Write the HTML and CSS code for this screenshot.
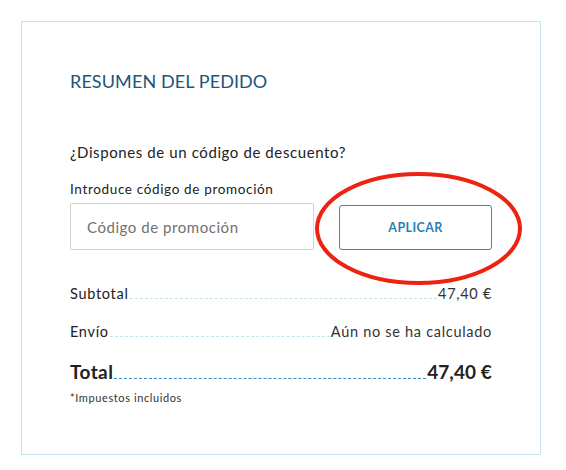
FILE: index.html
```
<!DOCTYPE html>
<html lang="es">
<head>
<meta charset="utf-8">
<link rel="stylesheet" href="styles.css">
</head>
<body>
<div class="card">
  <h2 class="title">RESUMEN DEL PEDIDO</h2>
  <p class="question">¿Dispones de un código de descuento?</p>
  <label class="promo-label" for="promo">Introduce código de promoción</label>
  <div class="promo-row">
    <input id="promo" class="promo-input" type="text" placeholder="Código de promoción">
    <div class="btn-wrap">
      <button class="apply-btn">APLICAR</button>
      <svg class="highlight" width="209" height="115" viewBox="0 0 209 115"><ellipse cx="104.5" cy="57.5" rx="101.5" ry="54.5" fill="none" stroke="#ee2211" stroke-width="4"/></svg>
    </div>
  </div>
  <div class="line">
    <span class="line-label">Subtotal</span><span class="dots"></span><span class="line-value">47,40 €</span>
  </div>
  <div class="line">
    <span class="line-label">Envío</span><span class="dots"></span><span class="line-value">Aún no se ha calculado</span>
  </div>
  <div class="line total">
    <span class="line-label">Total</span><span class="dots"></span><span class="line-value">47,40 €</span>
  </div>
  <p class="taxes">*Impuestos incluidos</p>
</div>
</body>
</html>
```
FILE: styles.css
```
* { box-sizing: border-box; }
html, body { margin: 0; background: #fff; }
body {
  font-family: "Lato", "Noto Sans", sans-serif;
  color: #222;
  padding: 21px 0 0 21px;
}
.card {
  width: 520px;
  height: 434px;
  border: 1px solid #c6e3f0;
  padding: 47px 48px 0 48px;
}
.title {
  margin: 0;
  font-size: 18px;
  font-weight: 400;
  line-height: 24px;
  color: #22557a;
  letter-spacing: 0.1px;
}
.question {
  margin: 49px 0 0;
  font-size: 15px;
  line-height: 20px;
  letter-spacing: 0.6px;
}
.promo-label {
  display: block;
  margin-top: 18px;
  font-size: 13.5px;
  line-height: 18px;
  letter-spacing: 0.65px;
}
.promo-row {
  display: flex;
  align-items: flex-start;
  margin-top: 5px;
}
.promo-input {
  width: 244px;
  height: 47px;
  border: 1px solid #d2d2d2;
  border-radius: 2px;
  padding: 0 16px;
  font-family: inherit;
  font-size: 15px;
  letter-spacing: 0.55px;
  color: #222;
  outline: none;
}
.promo-input::placeholder { color: #707070; }
.btn-wrap {
  position: relative;
  margin-left: 25px;
  margin-top: 2px;
}
.apply-btn {
  display: block;
  width: 153px;
  height: 45px;
  background: #fff;
  border: 1px solid #3a86b6;
  border-radius: 3px;
  color: #2a80b5;
  font-family: inherit;
  font-weight: 700;
  font-size: 12.5px;
  letter-spacing: 0.4px;
}
.highlight {
  position: absolute;
  left: -25px;
  top: -34px;
  pointer-events: none;
}
.line {
  display: flex;
  align-items: baseline;
  font-size: 14.5px;
  line-height: 20px;
  letter-spacing: 0.7px;
}
.dots {
  flex: 1;
  border-bottom: 1px dashed #c6e3f0;
  margin: 0 1px;
}
.promo-row + .line { margin-top: 34px; }
.line + .line { margin-top: 18px; }
.line-value { color: #333; }
.total {
  margin-top: 18px !important;
  font-size: 19px;
  font-weight: 700;
  line-height: 24px;
  letter-spacing: 0.4px;
}
.total .dots { border-bottom-color: #3d8fc0; }
.total .line-value { color: #222; letter-spacing: 0.1px; }
.taxes {
  margin: 7px 0 0;
  font-size: 11px;
  line-height: 14px;
  color: #333;
  letter-spacing: 0.6px;
}
```
